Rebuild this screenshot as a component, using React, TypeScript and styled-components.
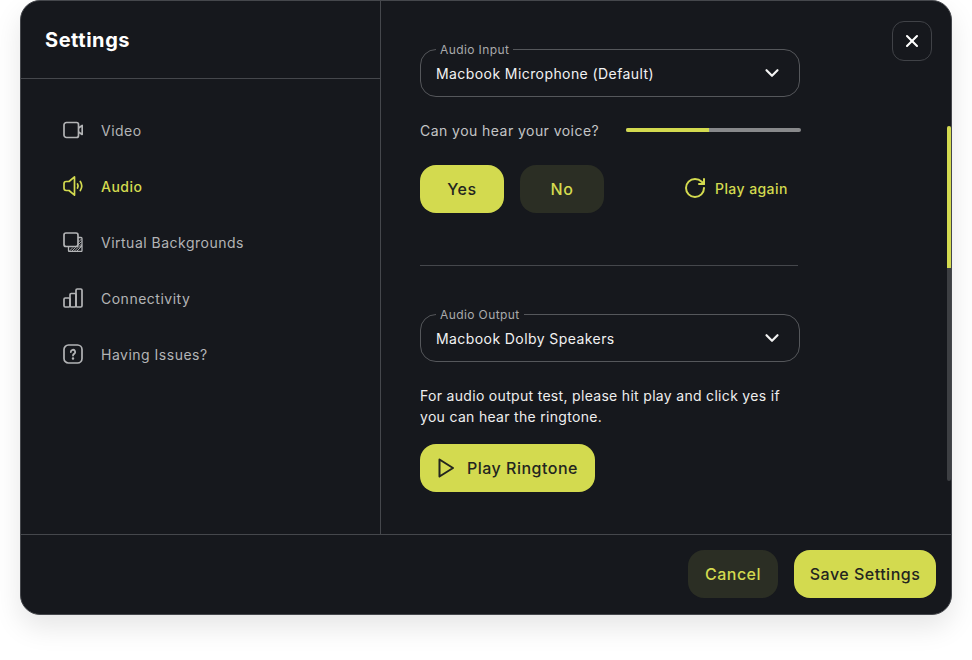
import styled, { createGlobalStyle } from 'styled-components';
import { ChevronDown, RotateCw, X } from 'lucide-react';

const lime = '#d3da4f';
const limeDim = '#2b2e24';
const panel = '#16181d';
const line = '#45474c';

const GlobalStyle = createGlobalStyle`
  html, body {
    margin: 0;
    padding: 0;
    background: #fff;
  }
  body {
    font-family: 'Inter', 'Liberation Sans', sans-serif;
  }
  * {
    box-sizing: border-box;
  }
`;

const Page = styled.div`
  width: 972px;
  height: 660px;
  padding: 0 20px 45px;
  overflow: hidden;
`;

const Modal = styled.div`
  position: relative;
  height: 615px;
  display: flex;
  flex-direction: column;
  background: ${panel};
  border: 1px solid ${line};
  border-radius: 20px;
  box-shadow: 0 12px 28px rgba(0, 0, 0, 0.1);
  overflow: hidden;
`;

const Body = styled.div`
  flex: 1;
  display: flex;
  min-height: 0;
`;

const Sidebar = styled.aside`
  width: 360px;
  border-right: 1px solid ${line};
`;

const SidebarHeader = styled.div`
  height: 78px;
  padding: 25px 24px 0;
  border-bottom: 1px solid ${line};
`;

const Title = styled.h1`
  margin: 0;
  font-size: 20px;
  line-height: 28px;
  font-weight: 700;
  letter-spacing: 0.55px;
  color: #fff;
`;

const NavList = styled.nav`
  display: flex;
  flex-direction: column;
  gap: 28px;
  padding: 37px 42px;
`;

const NavItem = styled.div<{ $active?: boolean }>`
  display: flex;
  align-items: center;
  gap: 18px;
  height: 28px;
  font-size: 14px;
  letter-spacing: 0.5px;
  font-weight: ${(p) => (p.$active ? 500 : 400)};
  color: ${(p) => (p.$active ? lime : '#b3b4b6')};

  svg {
    flex: none;
    width: 20px;
    height: 20px;
  }
`;

const Content = styled.main`
  flex: 1;
  padding: 48px 0 0 39px;
`;

const Column = styled.div`
  width: 380px;
`;

const Select = styled.fieldset`
  margin: 0 0 -7px;
  height: 55px;
  padding: 0 16px 6px 15px;
  display: flex;
  align-items: center;
  justify-content: space-between;
  border: 1px solid #55575b;
  border-radius: 16px;
  font-size: 14px;
  letter-spacing: 0.42px;
  color: #f2f2f2;
  transform: translateY(-7px);

  legend {
    padding: 2px 4px 0;
    font-size: 12px;
    line-height: 12px;
    letter-spacing: 0.4px;
    color: #a9aaac;
  }

  svg {
    width: 22px;
    height: 22px;
  }
`;

const VoiceRow = styled.div`
  display: flex;
  align-items: center;
  justify-content: space-between;
  width: 381px;
  height: 20px;
  margin-top: 23px;
  font-size: 14px;
  letter-spacing: 0.45px;
  color: #c4c5c6;
`;

const Meter = styled.div`
  width: 175px;
  height: 4px;
  border-radius: 2px;
  background: #88898b;
  overflow: hidden;
`;

const MeterFill = styled.div`
  height: 100%;
  background: ${lime};
`;

const AnswerRow = styled.div`
  display: flex;
  align-items: center;
  gap: 16px;
  margin-top: 25px;
`;

const Button = styled.button<{ $primary?: boolean; $width: number }>`
  display: flex;
  align-items: center;
  justify-content: center;
  gap: 12px;
  flex: none;
  width: ${(p) => p.$width}px;
  height: 48px;
  padding: 0;
  border: 0;
  border-radius: 16px;
  font-family: inherit;
  font-size: 16px;
  font-weight: 500;
  letter-spacing: 0.5px;
  background: ${(p) => (p.$primary ? lime : limeDim)};
  color: ${(p) => (p.$primary ? '#23251f' : lime)};
`;

const PlayAgain = styled.div`
  display: flex;
  align-items: center;
  gap: 8px;
  margin-left: 63px;
  padding-bottom: 2px;
  white-space: nowrap;
  font-size: 14px;
  font-weight: 500;
  letter-spacing: 0.42px;
  color: ${lime};

  svg {
    flex: none;
    width: 24px;
    height: 24px;
  }
`;

const Divider = styled.hr`
  width: 378px;
  margin: 52px 0 48px;
  border: 0;
  border-top: 1px solid ${line};
`;

const Help = styled.p`
  margin: 23px 0 17px;
  font-size: 14px;
  line-height: 21px;
  letter-spacing: 0.31px;
  color: #eeeeee;
`;

const Footer = styled.footer`
  height: 80px;
  display: flex;
  align-items: center;
  justify-content: flex-end;
  gap: 16px;
  padding: 0 15px 1px 0;
  border-top: 1px solid ${line};
`;

const CloseButton = styled.button`
  position: absolute;
  top: 20px;
  right: 19px;
  width: 40px;
  height: 40px;
  display: flex;
  align-items: center;
  justify-content: center;
  padding: 0;
  background: transparent;
  border: 1px solid #404247;
  border-radius: 12px;
  color: #fff;
`;

const ScrollTrack = styled.div`
  position: absolute;
  top: 125px;
  right: 0;
  width: 4px;
  height: 355px;
  border-radius: 2px;
  background: #3d3f43;
  overflow: hidden;
`;

const ScrollThumb = styled.div`
  height: 142px;
  background: ${lime};
`;

const VideoIcon = () => (
  <svg viewBox="0 0 20 20" fill="none" stroke="currentColor" strokeWidth="1.7" strokeLinejoin="round">
    <path d="M3.500 2.500h10a2 2 0 0 1 2 2v11a2 2 0 0 1-2 2h-10a2.500 2.500 0 0 1-2.500-2.500v-10a2.500 2.500 0 0 1 2.500-2.500Z" />
    <path d="M15.500 8 19.200 5.500v9L15.500 12" />
  </svg>
);

const SpeakerIcon = () => (
  <svg viewBox="0 0 20 20" fill="none" stroke="currentColor" strokeWidth="1.700" strokeLinejoin="round" strokeLinecap="round">
    <path d="M11.500 .9 6 5.500H3.200A2.200 2.200 0 0 0 1 7.700v4.600a2.200 2.200 0 0 0 2.200 2.200H6l5.500 4.600Z" />
    <path d="M14.500 8c.8 1.300.8 2.700 0 4" />
    <path d="M17.300 5.500c1.900 2.900 1.900 6.100 0 9" />
  </svg>
);

const BackgroundsIcon = () => (
  <svg viewBox="0 0 20 20" fill="none" stroke="currentColor" strokeLinejoin="round">
    <rect x="1" y="1" width="14" height="13.500" rx="2" strokeWidth="1.700" />
    <path d="M15 5.500h3a1 1 0 0 1 1 1v12a1 1 0 0 1-1 1H6.500a1 1 0 0 1-1-1v-3.500" strokeWidth="1.300" />
    <path d="M6.500 19l3.500-3.500M9 19l3.500-3.500M11.500 19l7-7M14 19l5-5M16.500 15.500l2.500-2.500M15 13l3.500-3.500M15 10.500l3.500-3.500M12.500 15.500l3-3" strokeWidth="0.900" />
  </svg>
);

const BarsIcon = () => (
  <svg viewBox="0 0 20 20" fill="none" stroke="currentColor" strokeWidth="1.700" strokeLinejoin="round">
    <rect x="1" y="10" width="6" height="9" rx="1.200" />
    <rect x="7" y="5.500" width="6" height="13.500" rx="1.200" />
    <rect x="13" y="1" width="6" height="18" rx="1.200" />
  </svg>
);

const QuestionIcon = () => (
  <svg viewBox="0 0 20 20" fill="none" stroke="currentColor" strokeWidth="1.700" strokeLinecap="round">
    <rect x="1" y="1" width="18" height="18" rx="4.500" />
    <path d="M7.800 8a2.200 2.200 0 1 1 3.300 1.900c-.7.400-1.100.9-1.100 1.700" strokeWidth="1.800" />
    <circle cx="10" cy="14.500" r="0.600" strokeWidth="1.300" />
  </svg>
);

const PlayIcon = () => (
  <svg width="18" height="20" viewBox="0 0 18 20" fill="none" stroke="currentColor" strokeWidth="2" strokeLinejoin="round">
    <path d="M2.500 1.500 16 10 2.500 18.500Z" />
  </svg>
);

const navItems = [
  { label: 'Video', icon: <VideoIcon /> },
  { label: 'Audio', icon: <SpeakerIcon />, active: true },
  { label: 'Virtual Backgrounds', icon: <BackgroundsIcon /> },
  { label: 'Connectivity', icon: <BarsIcon /> },
  { label: 'Having Issues?', icon: <QuestionIcon /> },
];

export default function App() {
  return (
    <Page>
      <GlobalStyle />
      <Modal>
        <Body>
          <Sidebar>
            <SidebarHeader>
              <Title>Settings</Title>
            </SidebarHeader>
            <NavList>
              {navItems.map((item) => (
                <NavItem key={item.label} $active={item.active}>
                  {item.icon}
                  {item.label}
                </NavItem>
              ))}
            </NavList>
          </Sidebar>

          <Content>
            <Column>
              <Select>
                <legend>Audio Input</legend>
                Macbook Microphone (Default)
                <ChevronDown strokeWidth={2.400} />
              </Select>

              <VoiceRow>
                Can you hear your voice?
                <Meter>
                  <MeterFill style={{ width: '47.500%' }} />
                </Meter>
              </VoiceRow>

              <AnswerRow>
                <Button $primary $width={84}>Yes</Button>
                <Button $width={84}>No</Button>
                <PlayAgain>
                  <RotateCw strokeWidth={2} />
                  Play again
                </PlayAgain>
              </AnswerRow>

              <Divider />

              <Select>
                <legend>Audio Output</legend>
                Macbook Dolby Speakers
                <ChevronDown strokeWidth={2.400} />
              </Select>

              <Help>
                For audio output test, please hit play and click yes if
                <br />
                you can hear the ringtone.
              </Help>

              <Button $primary $width={175}>
                <PlayIcon />
                Play Ringtone
              </Button>
            </Column>
          </Content>
        </Body>

        <Footer>
          <Button $width={90}>Cancel</Button>
          <Button $primary $width={142}>Save Settings</Button>
        </Footer>

        <CloseButton>
          <X size={20} strokeWidth={2.500} />
        </CloseButton>
        <ScrollTrack>
          <ScrollThumb />
        </ScrollTrack>
      </Modal>
    </Page>
  );
}
